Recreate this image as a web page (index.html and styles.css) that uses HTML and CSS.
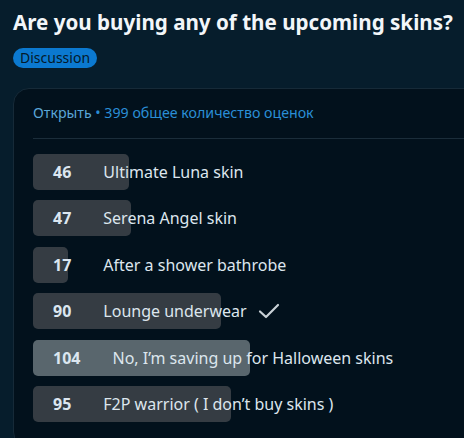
FILE: index.html
```html
<!DOCTYPE html>
<html lang="en">
<head>
<meta charset="UTF-8">
<title>Poll</title>
<link rel="stylesheet" href="styles.css">
</head>
<body>
	<h1 class="title">Are you buying any of the upcoming skins?</h1>
	<span class="flair">Discussion</span>

	<div class="poll">
		<div class="poll-head"><span class="state">Открыть</span> • 399 общее количество оценок</div>
		<ul class="options">
			<li class="option"><span class="fill" style="width:96px"></span><b>46</b><span class="label">Ultimate Luna skin</span></li>
			<li class="option"><span class="fill" style="width:98px"></span><b>47</b><span class="label">Serena Angel skin</span></li>
			<li class="option"><span class="fill" style="width:35px"></span><b>17</b><span class="label">After a shower bathrobe</span></li>
			<li class="option"><span class="fill" style="width:188px"></span><b>90</b><span class="label">Lounge underwear</span>
				<svg class="check" width="22" height="16" viewBox="0 0 22 16"><path d="M2 8.5 L8 14 L20 2" fill="none" stroke="#c9d1d6" stroke-width="2.2" stroke-linecap="round" stroke-linejoin="round"/></svg>
			</li>
			<li class="option top"><span class="fill" style="width:217px"></span><b>104</b><span class="label">No, I’m saving up for Halloween skins</span></li>
			<li class="option"><span class="fill" style="width:198px"></span><b>95</b><span class="label">F2P warrior ( I don’t buy skins )</span></li>
		</ul>
	</div>
</body>
</html>
```

FILE: styles.css
```css
* { padding: 0; margin: 0; box-sizing: border-box; }
li { list-style: none; }

html, body { height: 100%; overflow: hidden; }
body { background: #061d2c; padding: 8px 13px 0; font-family: "Noto Sans", "Open Sans", sans-serif; color: #dbe4ec; }

.title { font-size: 20.6px; font-weight: bold; color: #f2f6f9; line-height: 28px; white-space: nowrap; }
.flair { display: inline-block; margin-top: 12px; height: 20px; line-height: 20px; padding: 0 7px; border-radius: 10px; background: #0b79d0; color: #041a2a; font-size: 14px; }

.poll { margin-top: 20px; margin-right: -30px; height: 360px; background: #02111c; border: 1px solid #162a38; border-radius: 16px; padding: 14px 0 0 19px; }
.poll-head { font-size: 14.2px; color: #2a8ed6; line-height: 20px; padding-bottom: 15px; border-bottom: 1px solid #1b2d3a; }
.poll-head .state { color: #5aa6d8; }

.options { margin-top: 15px; display: flex; flex-direction: column; gap: 10.4px; }
.option { position: relative; height: 36px; display: flex; align-items: center; padding-left: 20px; font-size: 16px; }
.fill { position: absolute; left: 0; top: 0; bottom: 0; background: #353c43; border-radius: 5px; }
.option.top .fill { background: #59666d; }
.option b, .option .label, .check { position: relative; }
.option b { color: #dbe6f0; font-weight: bold; }
.label { margin-left: 32px; color: #dde6ee; }
.check { margin-left: 11px; }
```
